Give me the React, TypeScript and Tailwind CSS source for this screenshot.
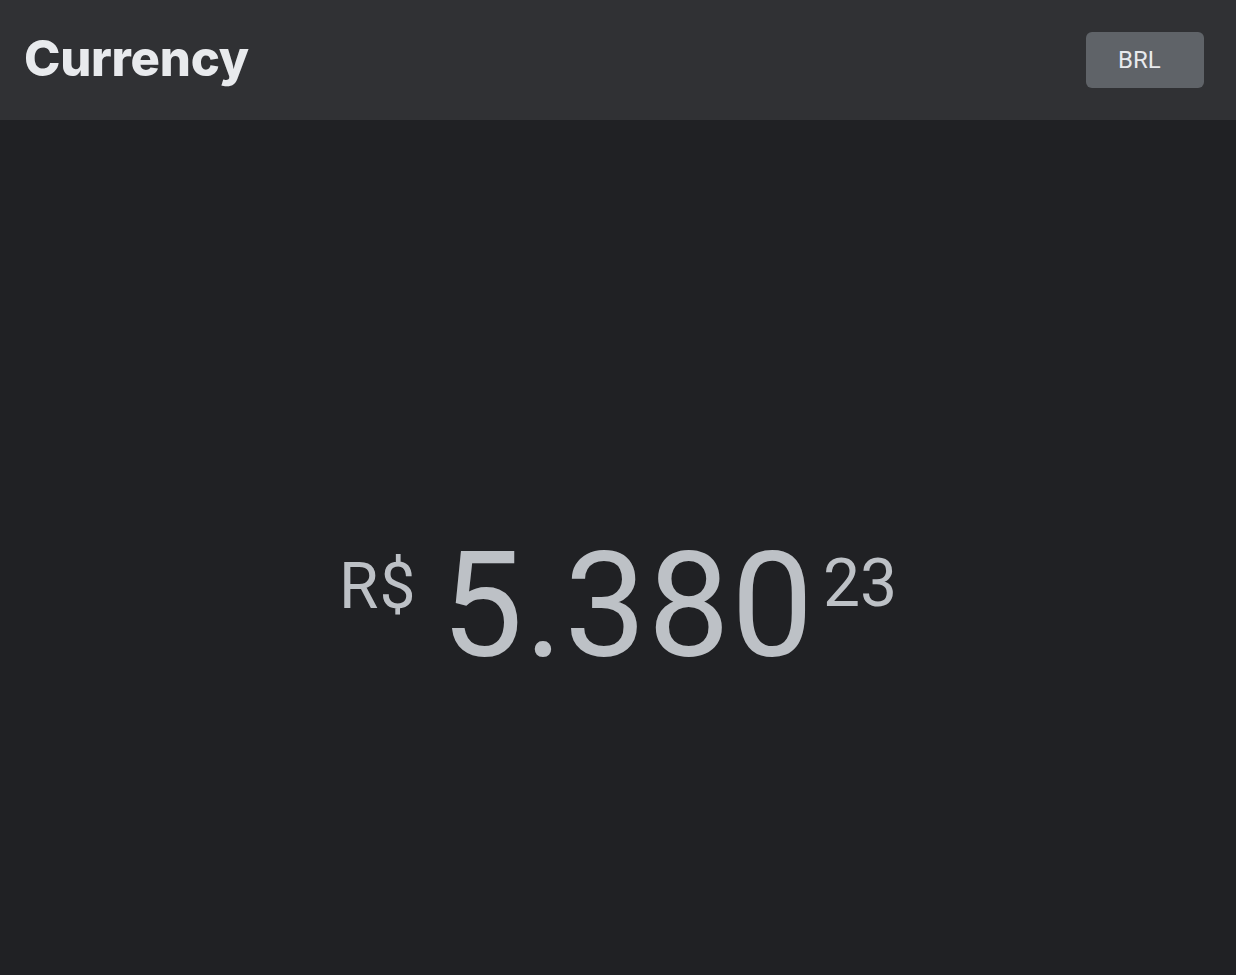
import React from 'react';

const App: React.FC = () => {
  return (
    <div className="flex min-h-screen flex-col bg-[#202124] font-['Roboto',sans-serif]">
      <header className="flex h-[120px] items-center justify-between bg-[#303134] pl-6 pr-8">
        <h1 className="mt-[-3px] font-['Inter',sans-serif] text-[49px] font-extrabold tracking-[-0.005em] text-[#e8eaed]">Currency</h1>
        <button className="h-14 w-[118px] rounded-md bg-[#5f6368] pl-8 text-left text-[24px] text-[#e8eaed]">BRL</button>
      </header>

      <main className="flex flex-1 items-center justify-center pt-[118px]">
        <div className="flex items-start text-[#bdc1c6]">
          <span className="mt-[21px] text-[64px] tracking-[0.02em] leading-none">R$</span>
          <span className="ml-6 text-[146px] tracking-[0.01em] leading-none">5.380</span>
          <span className="ml-2 mt-[17px] text-[66px] leading-none">23</span>
        </div>
      </main>
    </div>
  );
};

export default App;
